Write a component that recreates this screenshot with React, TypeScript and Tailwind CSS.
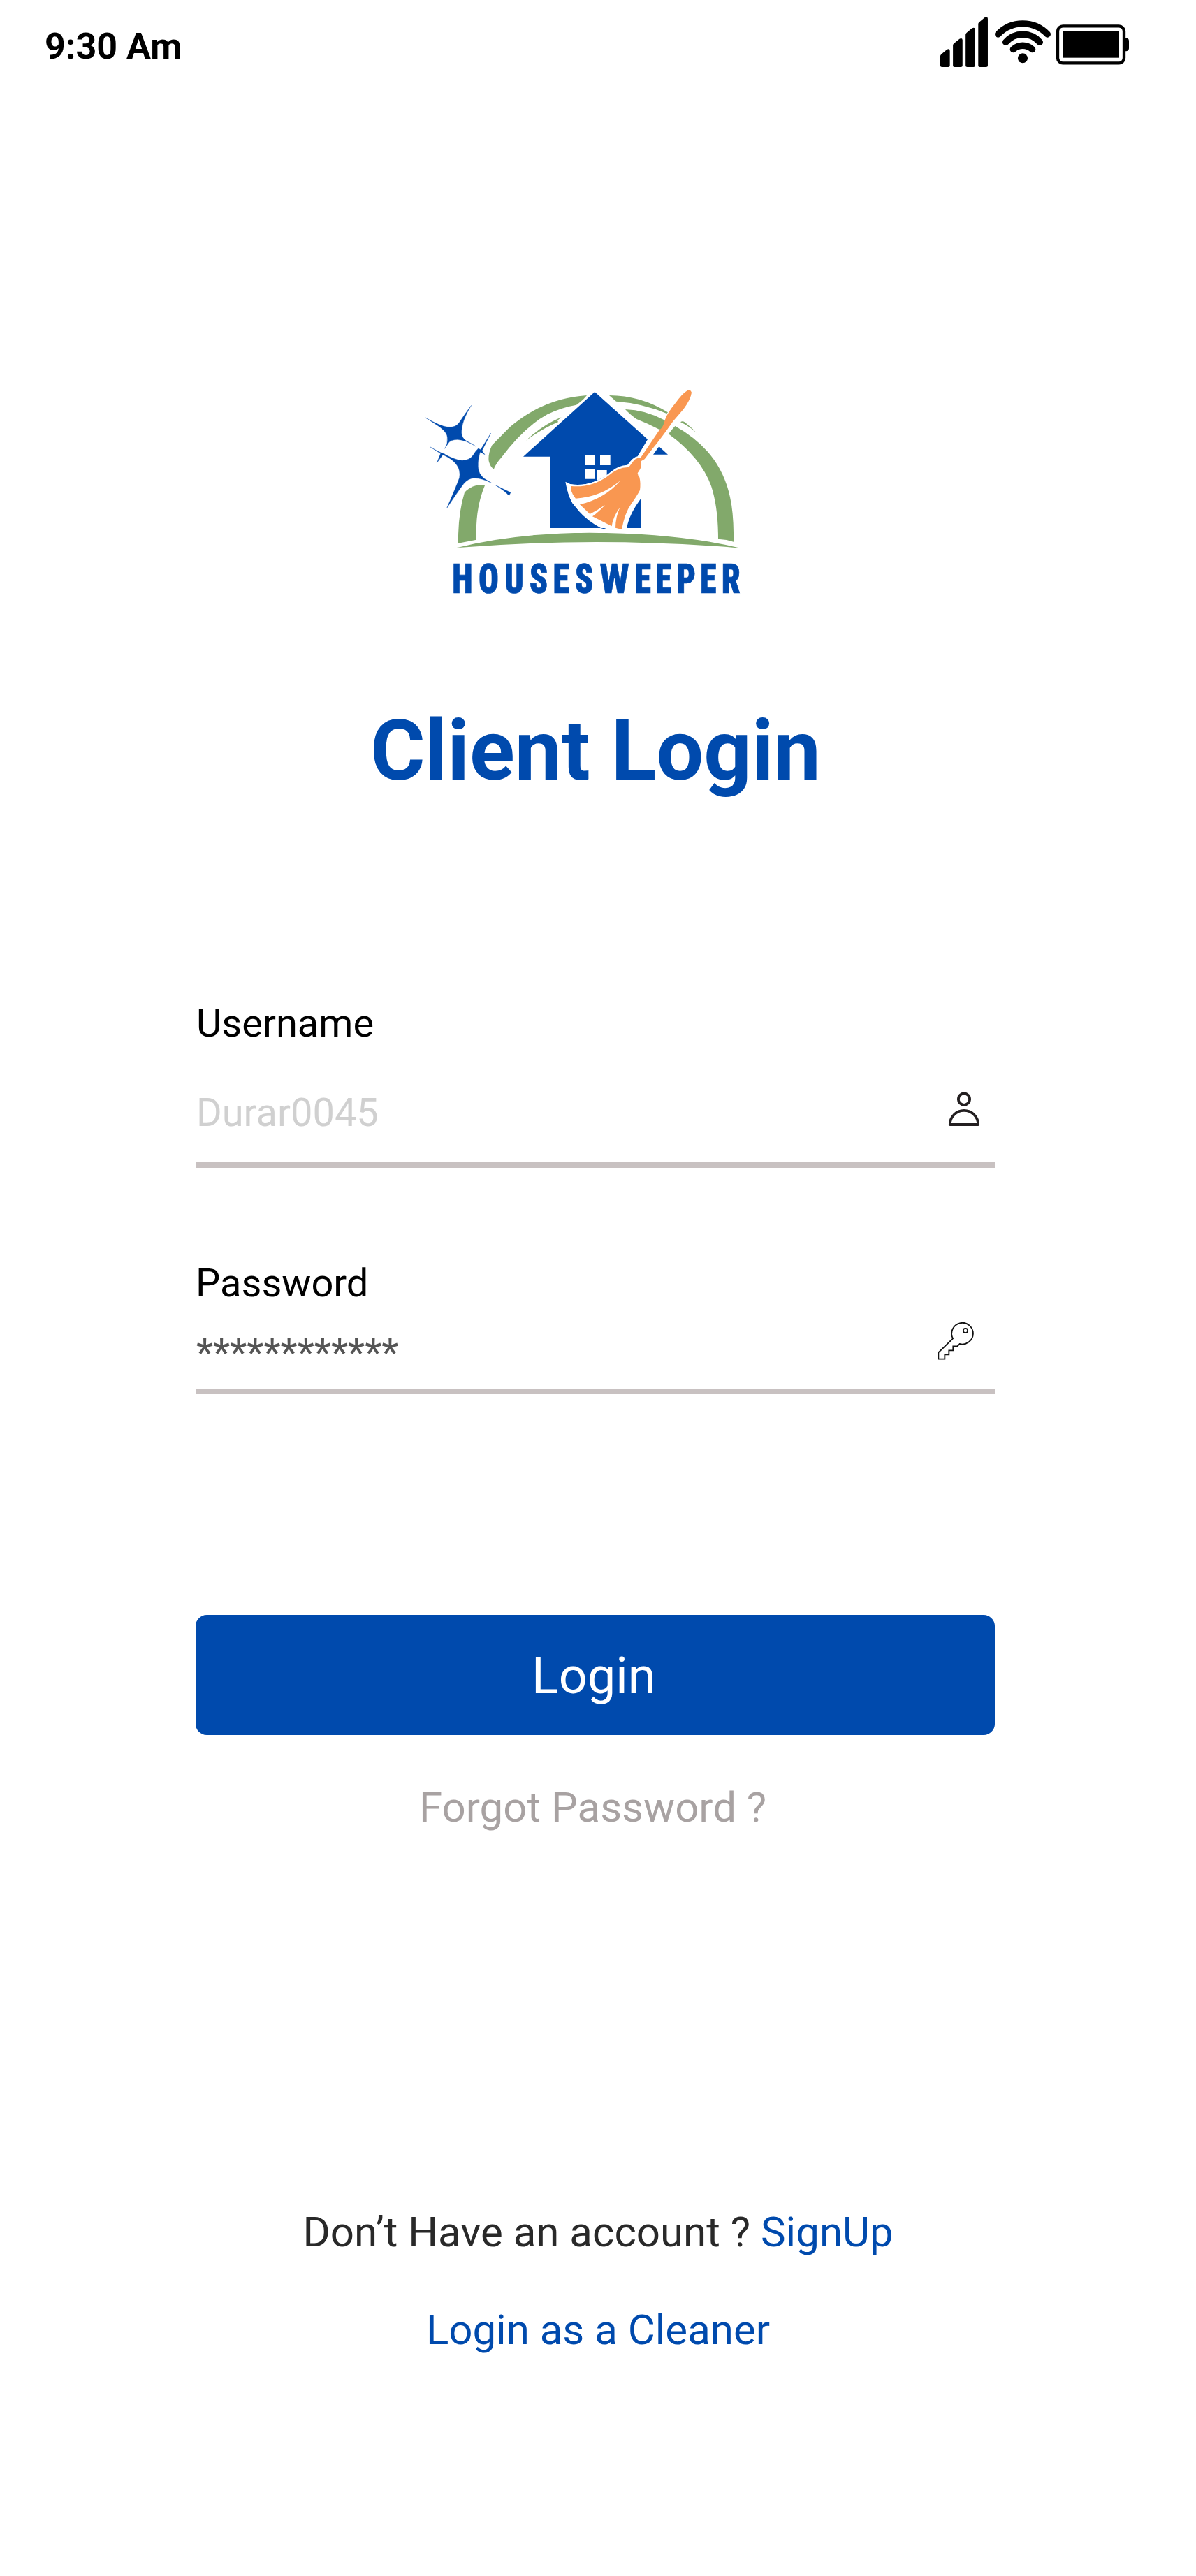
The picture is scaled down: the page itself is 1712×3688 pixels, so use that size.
import React from "react";

function StatusIcons() {
  return (
    <svg width="320" height="100" viewBox="0 0 960 300" aria-hidden="true">
      {[0, 1, 2, 3].map((i) => {
        const x = 78 + i * 54.3;
        const y = 180 - i * 46;
        return (
          <path
            key={i}
            d={`M${x} ${y + 31}q0 -5 4 -8l24 -20q12 -6 13 5V251q0 7 -7 7h-27q-7 0 -7 -7z`}
            fill="#000"
          />
        );
      })}
      <g fill="none" stroke="#000" strokeWidth="28" strokeLinecap="round">
        <path d="M326 117A147 147 0 0 1 538 117" />
        <path d="M359 151A97 97 0 0 1 505 151" />
        <path d="M391 182A60 60 0 0 1 473 182" />
      </g>
      <circle cx="432" cy="220" r="21" fill="#000" />
      <rect x="582" y="82" width="285" height="159" rx="22" fill="none" stroke="#000" strokeWidth="13" />
      <rect x="605" y="105" width="241" height="113" fill="#000" />
      <path d="M871 132h6q11 4 11 14v31q0 10 -11 13h-6z" fill="#000" />
    </svg>
  );
}

function Logo() {
  return (
    <svg width="490" height="340" viewBox="30 30 1470 1020" role="img" aria-label="Housesweeper">
      <g fill="#82a96b">
        <path d="M750 78Q690 83 640 96Q520 128 420 214L343 292Q325 330 329 360Q334 382 350 396Q360 370 383 345Q480 215 580 160Q640 130 705 119L715 112Q735 98 750 78Z" />
        <path d="M489 272Q560 205 641 172L624 186L627 193Q560 220 489 272Z" />
        <path d="M198 713Q196 590 225 495Q245 473 275 465L312 465Q270 565 276 698Z" />
        <path d="M183 733L197 731Q440 670 760 668Q1150 670 1410 734Q1100 708 790 708Q500 708 197 732Z" />
      </g>

      <g fill="#004aad" stroke="#004aad" strokeWidth="1" strokeLinejoin="round">
        <path d="M254 121Q211 190 212 240Q214 262 232 273Q255 285 275 298Q230 270 195 268Q163 268 153 287L140 307Q154 285 151 258Q150 238 120 215Q95 198 57 174Q120 210 152 214Q186 218 202 195Q225 160 254 121Z" />
        <path d="M338 240L300 316L312 332L292 322Q282 350 283 385Q284 415 310 436Q325 445 342 455Q300 434 265 433Q240 436 222 457Q190 500 148 564Q185 480 203 432Q208 400 192 378Q175 352 132 333L106 368L122 328L78 300Q105 316 128 326Q138 326 145 334Q185 355 215 358Q250 356 263 333Q272 317 284 306L294 311Z" />
        <path d="M355 462Q390 480 423 495L416 509Q400 490 355 462Z" />
      </g>

      <g transform="translate(690 0)">
        <g fill="#004aad">
          <path d="M94 63L321 267L278 340Q260 342 234 377Q197 378 165 405Q130 435 90 449Q40 468 -12 459L-30 451Q-20 510 -2 540L28 577Q60 612 120 643L150 653L142 654L118 648H-96V341H-213Z" />
          <path d="M292 521V648H234V635Q245 585 292 521Z" />
          <path d="M370 298L408 332H345Z" />
        </g>
        <g fill="#fff">
          <path d="M51 334h44v44h-44zM117 334h44v44h-44zM51 393h44v44h-44zM102 399h44v24l-44 22z" />
          <path d="M-32 449Q-18 462 20 462Q60 462 100 446L120 470L140 600V648H120Q60 615 28 577L-2 541Q-22 505 -32 449Z" />
        </g>
        <path
          fill="#f99751"
          d="M492 57Q505 52 510 66Q505 98 475 137L430 190Q380 262 340 310L308 352L294 360L294 372Q296 388 278 412Q279 423 286 430Q292 455 288 485Q275 510 250 545Q222 585 210 654L183 647Q183 600 203 558Q172 600 167 640L84 598Q110 580 138 549Q105 572 73 588L30 547Q140 520 204 444Q120 515 12 521Q-2 505 -6 490V468Q80 475 150 425Q195 385 240 387L262 358Q275 345 290 347L375 222Q388 205 396 182Q405 155 440 112Q470 70 492 57Z"
        />
        <g fill="#82a96b">
          <path d="M156 78Q290 78 408 151L403 156Q300 112 186 104Z" />
          <path d="M225 138Q310 140 395 185Q386 220 372 225Q325 200 272 179Q243 158 225 138Z" />
          <path d="M462 193Q470 186 480 193Q515 220 548 257Q510 215 462 193Z" />
          <path d="M439 210Q520 255 577 318Q650 400 675 515Q692 590 690 707L660 699L624 695Q624 560 595 470Q550 345 411 244Q425 225 439 210Z" />
        </g>
      </g>

      <g transform="scale(3) translate(-590 -540) scale(.8 1)">
        <text
          x="827.5 874.4 920 963.8 1004 1045 1099.4 1150.3 1187.1 1228 1267.1 1308"
          y="848.7"
          textAnchor="middle"
          fill="#004aad"
          stroke="#004aad"
          strokeWidth="0.7"
          className="font-['Roboto_Condensed','Roboto',sans-serif] text-[60px] font-black"
        >
          HOUSES<tspan className="font-['Roboto',sans-serif]">W</tspan>EEPER
        </text>
      </g>
    </svg>
  );
}

function UserIcon() {
  return (
    <svg width="48" height="52" viewBox="108 66 144 156" fill="none" stroke="#231f20" strokeWidth="11.5" strokeLinejoin="round">
      <circle cx="180" cy="101" r="24.5" />
      <path d="M119.5 210A60.5 60.5 0 0 1 240.5 210Z" />
    </svg>
  );
}

function KeyIcon() {
  return (
    <svg width="56" height="58" viewBox="60 63 168 174" fill="none" stroke="#111" strokeWidth="5.5">
      <path d="M132 139L70 199V227H97V208H115V190H133V172H151L161 162A46 46 0 1 0 132 139Z" />
      <circle cx="186" cy="105" r="9.5" />
    </svg>
  );
}

export default function App() {
  return (
    <div className="flex h-[3688px] w-[1712px] flex-col bg-white font-['Roboto',sans-serif] leading-[normal]">
      <header className="flex h-[110px] items-start justify-between pr-[72px] pl-16 pt-2.5">
        <span className="mt-[26px] text-[52px] font-bold text-black">9:30 Am</span>
        <StatusIcons />
      </header>

      <div className="mt-[440px] ml-[600px] flex">
        <Logo />
      </div>

      <h1 className="mt-[115px] ml-[530px] h-[140px] text-[120px] font-bold whitespace-nowrap text-[#004aad]">
        Client Login
      </h1>

      <form className="mx-[280px] mt-[287px] flex w-[1144px] flex-col">
        <label className="h-[66px] pl-px text-[56px] text-black">Username</label>
        <div className="flex h-[174px] items-start justify-between border-b-8 border-[#c8c1c1] pr-[20px] pl-px">
          <span className="mt-[62px] text-[56px] text-[#d0d0d0]">Durar0045</span>
          <span className="mt-16 flex">
            <UserIcon />
          </span>
        </div>

        <label className="mt-[132px] h-[66px] text-[56px] text-black">Password</label>
        <div className="flex h-[126px] items-start justify-between border-b-8 border-[#c8c1c1] pr-[28px] pl-px">
          <span className="mt-[34px] text-[56px] text-[#555555]">************</span>
          <span className="mt-[21px] flex">
            <KeyIcon />
          </span>
        </div>

        <button
          type="button"
          className="mt-[316px] flex h-[172px] items-start rounded-2xl bg-[#004aad] pt-[45px] pl-[481px] text-[72px] text-white"
        >
          Login
        </button>
        <a className="mt-[68px] ml-[320px] h-[71px] text-[60px] text-[#a8a2a2]">Forgot Password ?</a>
      </form>

      <p className="mt-[537px] h-[71px] text-center text-[60px] text-[#292929]">
        Don’t Have an account ? <a className="text-[#004aad]">SignUp</a>
      </p>
      <a className="mt-[69px] h-[71px] text-center text-[60px] text-[#004aad]">Login as a Cleaner</a>
    </div>
  );
}
